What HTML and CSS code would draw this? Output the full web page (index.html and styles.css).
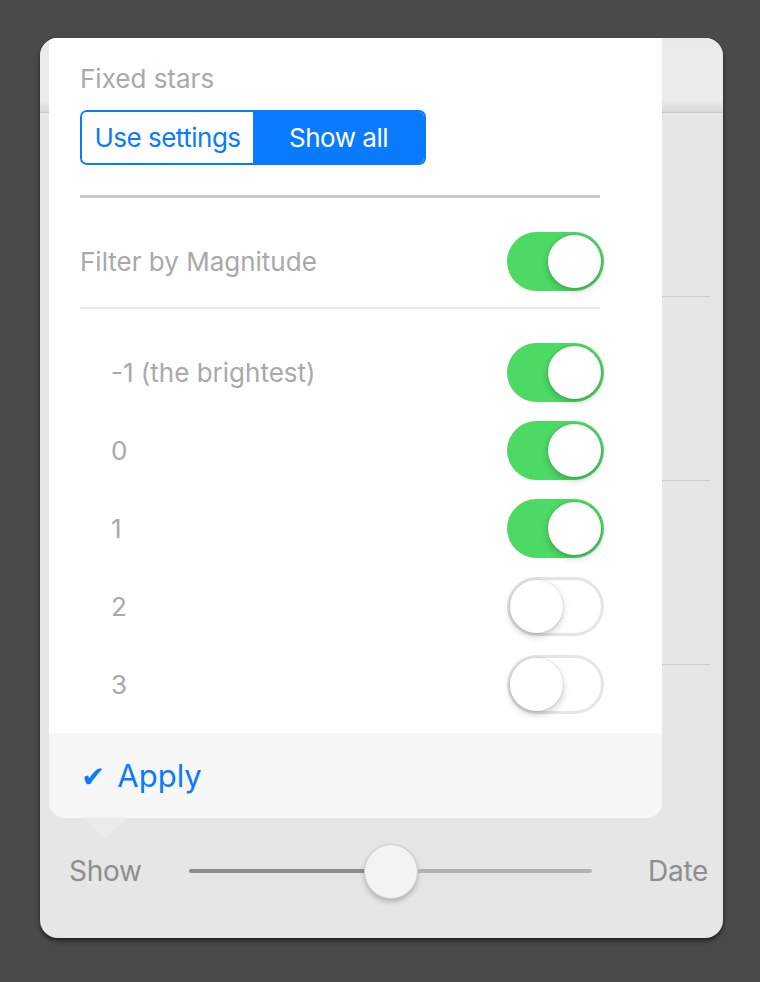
FILE: index.html
```html
<!DOCTYPE html>
<html lang="en">
<head>
<meta charset="utf-8">
<title>Fixed stars</title>
<link rel="stylesheet" href="styles.css">
</head>
<body>
<div class="screen">
  <div class="card">
    <div class="header"></div>
    <div class="bg-list">
      <div class="bg-row"></div>
      <div class="bg-row"></div>
      <div class="bg-row"></div>
    </div>
    <div class="slider-row">
      <span class="slider-label">Show</span>
      <div class="track">
        <div class="track-fill"></div>
        <div class="thumb"></div>
        <div class="track-rest"></div>
      </div>
      <span class="slider-label date">Date</span>
    </div>

    <div class="popover">
      <div class="pop-body">
        <div class="title">Fixed stars</div>
        <div class="segmented">
          <div class="seg">Use settings</div>
          <div class="seg active">Show all</div>
        </div>
        <div class="sep-thick"></div>
        <div class="row filter-row">
          <span class="label">Filter by Magnitude</span>
          <div class="toggle on"><div class="knob"></div></div>
        </div>
        <div class="sep-thin"></div>
        <div class="list">
          <div class="row mag"><span class="label">-1 (the brightest)</span><div class="toggle on"><div class="knob"></div></div></div>
          <div class="row mag"><span class="label">0</span><div class="toggle on"><div class="knob"></div></div></div>
          <div class="row mag"><span class="label">1</span><div class="toggle on"><div class="knob"></div></div></div>
          <div class="row mag"><span class="label">2</span><div class="toggle"><div class="knob"></div></div></div>
          <div class="row mag"><span class="label">3</span><div class="toggle"><div class="knob"></div></div></div>
        </div>
      </div>
      <div class="footer"><span class="check">✔</span><span class="apply">Apply</span></div>
      <div class="arrow"></div>
    </div>
  </div>
</div>
</body>
</html>
```
FILE: styles.css
```css
* { box-sizing: border-box; }
html, body { margin: 0; padding: 0; }
body {
  background: #4a4a4a;
  font-family: "Inter", "Roboto", "Liberation Sans", sans-serif;
  width: 760px;
  height: 982px;
  overflow: hidden;
}
.screen {
  padding: 38px 0 0 40px;
}
.card {
  position: relative;
  width: 683px;
  height: 900px;
  border-radius: 18px;
  overflow: hidden;
  background: #e6e6e6;
  display: flex;
  flex-direction: column;
  padding-bottom: 37px;
  box-shadow: 0 3px 4px rgba(0,0,0,0.55);
}
.header {
  flex: none;
  height: 75px;
  background: linear-gradient(#eaeaea 0%, #ebebeb 70%, #ededed 82%, #d9d9d9 100%);
  border-bottom: 1px solid #c8c8c8;
}
.bg-list {
  flex: none;
  margin: 0 13px 0 30px;
}
.bg-row {
  height: 184px;
  border-bottom: 1.5px solid #cdcdcd;
}
.slider-row {
  margin-top: auto;
  height: 60px;
  display: flex;
  align-items: center;
  padding: 0 15px 0 29px;
}
.slider-label {
  font-size: 28px;
  color: #8e8e8e;
  letter-spacing: -0.3px;
}
.date { margin-left: auto; }
.track {
  margin-left: 47px;
  width: 403px;
  display: flex;
  align-items: center;
}
.track-fill {
  width: 175px;
  height: 4px;
  border-radius: 2px 0 0 2px;
  background: #8d8d8d;
}
.thumb {
  flex: none;
  width: 54px;
  height: 55px;
  border-radius: 50%;
  background: #f3f3f3;
  border: 1px solid #cfcfcf;
  box-shadow: 0 3px 5px rgba(0,0,0,0.22);
}
.track-rest {
  flex: 1;
  height: 4px;
  border-radius: 0 2px 2px 0;
  background: #b2b2b2;
}

/* popover overlay */
.popover {
  position: absolute;
  left: 9px;
  top: 0;
  width: 613px;
  height: 780px;
  background: #fff;
  border-radius: 0 0 16px 16px;
  display: flex;
  flex-direction: column;
}
.pop-body {
  padding: 25px 62px 0 31px;
}
.title {
  font-size: 26px;
  line-height: 32px;
  color: #a9a9a9;
}
.segmented {
  margin-top: 15px;
  width: 346px;
  height: 55px;
  border: 2px solid #0a7aff;
  border-radius: 7px;
  display: flex;
  overflow: hidden;
}
.seg {
  width: 50%;
  display: flex;
  align-items: center;
  justify-content: center;
  font-size: 26px;
  letter-spacing: -0.5px;
  color: #0a7aff;
  background: #fff;
}
.seg.active {
  background: #0a7aff;
  color: #fff;
}
.sep-thick {
  margin-top: 30px;
  height: 3px;
  background: #cbcbcb;
}
.row {
  height: 78px;
  display: flex;
  align-items: center;
  justify-content: space-between;
  margin-right: -4px;
}
.filter-row { margin-top: 24px; }
.label {
  font-size: 26px;
  color: #a9a9a9;
}
.mag .label { padding-left: 31px; }
.sep-thin {
  margin-top: 7px;
  height: 2px;
  background: #e9e9e9;
}
.list { padding-top: 24px; }

.toggle {
  width: 97px;
  height: 59px;
  border-radius: 30px;
  padding: 3px;
  display: flex;
  justify-content: flex-start;
  background: #fff;
  box-shadow: inset 0 0 0 3px #e5e5e5;
}
.toggle.on {
  background: #4cd964;
  box-shadow: none;
  justify-content: flex-end;
}
.knob {
  width: 53px;
  height: 53px;
  border-radius: 50%;
  background: #fff;
  box-shadow: 0 3px 7px rgba(0,0,0,0.22), 0 0 0 1px rgba(0,0,0,0.05);
}

.footer {
  margin-top: auto;
  height: 85px;
  background: #f7f7f7;
  border-radius: 0 0 16px 16px;
  display: flex;
  align-items: center;
  padding-left: 32px;
  color: #0a7aff;
}
.check {
  font-family: "DejaVu Sans", sans-serif;
  font-size: 29px;
  margin-right: 12px;
  position: relative;
  top: 1px;
}
.apply {
  font-size: 31px;
}
.arrow {
  position: absolute;
  left: 41px;
  bottom: -15px;
  width: 31px;
  height: 31px;
  background: #ebebeb;
  transform: rotate(45deg);
  clip-path: polygon(100% 0, 100% 100%, 0 100%);
  border-bottom-right-radius: 4px;
}
```
